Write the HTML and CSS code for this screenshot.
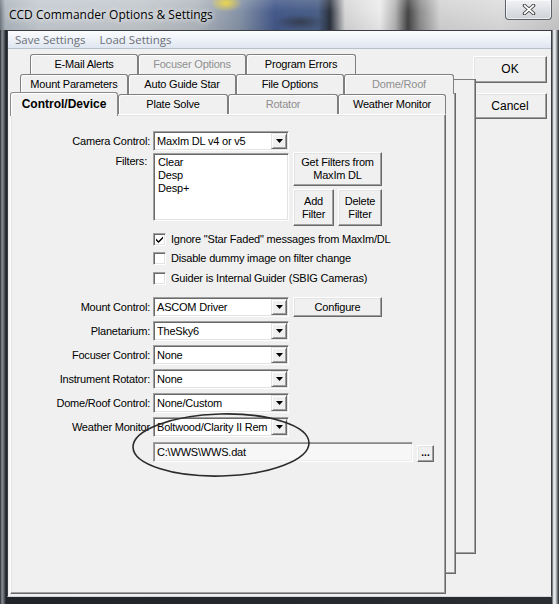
FILE: index.html
```html
<!DOCTYPE html>
<html>
<head>
<meta charset="utf-8">
<title>CCD Commander Options &amp; Settings</title>
<link rel="stylesheet" href="styles.css">
</head>
<body>
<div class="window">
  <div class="titlebar">
    <span class="title">CCD Commander Options &amp; Settings</span>
    <div class="close">
      <svg width="14" height="11" viewBox="0 0 14 11"><path d="M2.5 1.5 L11.5 9.5 M11.5 1.5 L2.5 9.5" stroke="#3a3a3a" stroke-width="3.6" stroke-linecap="round" fill="none"/><path d="M2.5 1.5 L11.5 9.5 M11.5 1.5 L2.5 9.5" stroke="#ffffff" stroke-width="1.7" stroke-linecap="round" fill="none"/></svg>
    </div>
  </div>
  <div class="client">
    <div class="menubar"><span class="menu">Save Settings</span><span class="menu">Load Settings</span></div>
    <div class="main">
      <div class="tabarea">
        <div class="backpage back1"></div>
        <div class="backpage back2"></div>
        <div class="tabrow row1">
          <div class="tab">E-Mail Alerts</div>
          <div class="tab dis">Focuser Options</div>
          <div class="tab last">Program Errors</div>
        </div>
        <div class="tabrow row2">
          <div class="tab">Mount Parameters</div>
          <div class="tab">Auto Guide Star</div>
          <div class="tab">File Options</div>
          <div class="tab dis last">Dome/Roof</div>
        </div>
        <div class="tabrow row3">
          <div class="tab sel">Control/Device</div>
          <div class="tab w110">Plate Solve</div>
          <div class="tab dis w110">Rotator</div>
          <div class="tab">Weather Monitor</div>
        </div>
        <div class="panel">
          <div class="prow r-camera">
            <span class="lbl">Camera Control:</span>
            <div class="combo"><span class="cval">MaxIm DL v4 or v5</span><span class="ddbtn"></span></div>
          </div>
          <div class="prow r-filters">
            <span class="lbl lbl-top">Filters:</span>
            <div class="listbox">
              <div class="item">Clear</div>
              <div class="item">Desp</div>
              <div class="item">Desp+</div>
            </div>
            <div class="fbtns">
              <div class="btn getf">Get Filters from<br>MaxIm DL</div>
              <div class="fb2">
                <div class="btn addf">Add<br>Filter</div>
                <div class="btn delf">Delete<br>Filter</div>
              </div>
            </div>
          </div>
          <div class="cbrow cb1"><span class="cbox checked"><svg width="9" height="9" viewBox="0 0 9 9"><path d="M1 3.5 L3.5 6 L8 1.5 L8 3.5 L3.5 8 L1 5.5 Z" fill="#000"/></svg></span><span class="cbtext">Ignore "Star Faded" messages from MaxIm/DL</span></div>
          <div class="cbrow"><span class="cbox"></span><span class="cbtext">Disable dummy image on filter change</span></div>
          <div class="cbrow"><span class="cbox"></span><span class="cbtext">Guider is Internal Guider (SBIG Cameras)</span></div>
          <div class="prow r-mount">
            <span class="lbl">Mount Control:</span>
            <div class="combo"><span class="cval">ASCOM Driver</span><span class="ddbtn"></span></div>
            <div class="btn config">Configure</div>
          </div>
          <div class="prow r-next">
            <span class="lbl">Planetarium:</span>
            <div class="combo"><span class="cval">TheSky6</span><span class="ddbtn"></span></div>
          </div>
          <div class="prow r-next">
            <span class="lbl">Focuser Control:</span>
            <div class="combo"><span class="cval">None</span><span class="ddbtn"></span></div>
          </div>
          <div class="prow r-next">
            <span class="lbl">Instrument Rotator:</span>
            <div class="combo"><span class="cval">None</span><span class="ddbtn"></span></div>
          </div>
          <div class="prow r-next">
            <span class="lbl">Dome/Roof Control:</span>
            <div class="combo"><span class="cval">None/Custom</span><span class="ddbtn"></span></div>
          </div>
          <div class="prow r-next">
            <span class="lbl">Weather Monitor</span>
            <div class="combo"><span class="cval">Boltwood/Clarity II Rem</span><span class="ddbtn"></span></div>
          </div>
          <div class="pathrow">
            <div class="pathfield">C:\WWS\WWS.dat</div>
            <div class="btn dots">...</div>
          </div>
          <svg class="circle" width="184" height="70" viewBox="0 0 184 70"><ellipse cx="92" cy="34" rx="88" ry="31" fill="none" stroke="#2b2b2b" stroke-width="1.6" transform="rotate(-1.5 92 34)"/></svg>
        </div>
      </div>
      <div class="side">
        <div class="btn okbtn">OK</div>
        <div class="btn cancelbtn">Cancel</div>
      </div>
    </div>
  </div>
</div>
</body>
</html>
```

FILE: styles.css
```css
* { box-sizing: border-box; }
html, body { margin: 0; padding: 0; }
body { width: 559px; height: 604px; overflow: hidden; background: #1e2125; }

.window {
  width: 559px;
  height: 604px;
  display: flex;
  flex-direction: column;
  background:
    linear-gradient(to right, #23262a 0, #8b9197 2px, #5a5f65 4px, #202327 6px, #2a2d31 552px, #cfd2d6 553px, #eceded 555px, #8a8e93 557px, #222 559px);
}

.titlebar {
  height: 30px;
  flex: none;
  display: flex;
  align-items: flex-start;
  justify-content: space-between;
  background:
    radial-gradient(ellipse 16px 9px at 226px 3px, rgba(238,214,70,0.95), rgba(238,214,70,0)),
    radial-gradient(ellipse 26px 8px at 300px 22px, rgba(40,40,40,0.55), rgba(40,40,40,0)),
    linear-gradient(to bottom, rgba(255,255,255,0.15), rgba(255,255,255,0) 40%, rgba(0,0,0,0.05)),
    linear-gradient(to right, #6f7780 0, #aeb6be 5px, #c5cbd1 40px, #c3c8cd 140px, #b3b9bf 195px, #8592a6 240px, #44598a 275px, #4a5f86 318px, #2b313d 330px, #d6d6d6 345px, #ececec 380px, #b5b5b5 395px, #454545 408px, #8d8d8d 420px, #d3d3d3 440px, #dcdcdc 500px, #c9c9c9 559px);
}

.title {
  font-family: "Open Sans", "DejaVu Sans", sans-serif;
  font-size: 12px;
  line-height: 16px;
  padding: 7px 0 0 9px;
  color: #000;
  text-shadow: 0 0 5px rgba(255,255,255,0.9), 0 0 9px rgba(255,255,255,0.6);
}

.close {
  width: 47px;
  height: 20px;
  margin-right: 7px;
  border: 1px solid #5d6268;
  border-top: none;
  border-radius: 0 0 4px 4px;
  background: linear-gradient(to bottom, rgba(245,246,248,0.85), rgba(206,211,217,0.85));
  box-shadow: inset 0 0 0 1px rgba(255,255,255,0.6);
  display: flex;
  align-items: center;
  justify-content: center;
}

.client {
  flex: none;
  height: 567px;
  margin: 0 7px;
  border: 1px solid #3a3e43;
  border-bottom-color: #d6d8db;
  background: #f0f0f0;
}

.menubar {
  height: 18px;
  display: flex;
  align-items: center;
  background: linear-gradient(to bottom, #fbfcfe, #eef2f8 50%, #dfe6f1);
  border-bottom: 1px solid #b9c0cb;
  font-family: "Open Sans", "DejaVu Sans", sans-serif;
  font-size: 11.5px;
  color: #6b6f76;
}
.menu { padding: 0 7px; white-space: nowrap; }

.main {
  display: flex;
  padding-top: 5px;
  font-family: "Liberation Sans", Arial, sans-serif;
  font-size: 11px;
  color: #000;
}

.tabarea {
  position: relative;
  width: 456px;
  margin-left: 2px;
}

.backpage {
  position: absolute;
  z-index: 0;
  background: #f0f0f0;
  border-right: 1px solid #696969;
  border-bottom: 1px solid #696969;
  box-shadow: inset -1px -1px 0 #a0a0a0;
}
.back1 { left: 20px; top: 25px; width: 446px; height: 475px; border-top: 1px solid #7d7d7d; }
.back2 { left: 10px; top: 39px; width: 436px; height: 481px; }

.tabrow {
  position: relative;
  z-index: 2;
  display: flex;
  height: 20px;
}
.row1 { padding-left: 20px; }
.row2 { padding-left: 10px; }
.row3 { z-index: 3; }

.tab {
  flex: none;
  width: 108px;
  height: 20px;
  background: #f0f0f0;
  border: 1px solid #7f7f7f;
  border-bottom: none;
  border-radius: 3px 3px 0 0;
  box-shadow: inset 1px 1px 0 #fff;
  text-align: center;
  line-height: 19px;
  letter-spacing: -0.2px;
  white-space: nowrap;
}
.tab.last { width: 110px; }
.tab.w110 { width: 110px; }
.tab.dis { color: #8f8f8f; }
.tab.sel {
  width: 108px;
  height: 24px;
  margin-top: -2px;
  position: relative;
  z-index: 4;
  font-weight: bold;
  font-size: 12px;
  letter-spacing: 0;
  line-height: 23px;
  border-color: #8a8a8a;
  box-shadow: inset 1px 1px 0 #fff;
}

.panel {
  position: relative;
  z-index: 1;
  width: 436px;
  height: 480px;
  padding: 1px;
  background: #f0f0f0;
  border: 1px solid;
  border-color: #fff #696969 #696969 #fff;
  box-shadow: inset -1px -1px 0 #a0a0a0, inset 1px 1px 0 #e3e3e3;
  letter-spacing: -0.2px;
}

.prow { display: flex; align-items: flex-start; height: 20px; }
.r-camera { margin-top: 15px; }
.r-filters { margin-top: 1px; height: 73px; }
.r-mount { margin-top: 6px; }
.r-next { margin-top: 4px; }

.lbl {
  flex: none;
  width: 138px;
  margin-right: 3px;
  text-align: right;
  line-height: 20px;
  white-space: nowrap;
}
.lbl-top { line-height: 13px; margin-top: 3px; padding-right: 3px; }

.combo {
  flex: none;
  display: flex;
  width: 136px;
  height: 20px;
  background: #fff;
  border: 1px solid;
  border-color: #a0a0a0 #fff #fff #a0a0a0;
  box-shadow: inset 1px 1px 0 #696969, inset -1px -1px 0 #e3e3e3;
}
.cval {
  flex: 1;
  min-width: 0;
  padding-left: 3px;
  line-height: 18px;
  overflow: hidden;
  white-space: nowrap;
}
.ddbtn {
  flex: none;
  position: relative;
  width: 16px;
  height: 16px;
  margin: 1px 1px 0 0;
  background: #f0f0f0;
  border: 1px solid;
  border-color: #e3e3e3 #696969 #696969 #e3e3e3;
  box-shadow: inset 1px 1px 0 #fff, inset -1px -1px 0 #a0a0a0;
}
.ddbtn::after {
  content: "";
  position: absolute;
  left: 4px;
  top: 5px;
  width: 7px;
  height: 4px;
  background: #000;
  clip-path: polygon(0 0, 100% 0, 50% 100%);
}

.listbox {
  flex: none;
  width: 136px;
  height: 68px;
  margin-top: 1px;
  padding: 2px 4px;
  background: #fff;
  border: 1px solid;
  border-color: #a0a0a0 #fff #fff #a0a0a0;
  box-shadow: inset 1px 1px 0 #696969, inset -1px -1px 0 #e3e3e3;
}
.item { line-height: 13px; white-space: nowrap; }

.btn {
  display: flex;
  align-items: center;
  justify-content: center;
  text-align: center;
  background: #f0f0f0;
  border: 1px solid;
  border-color: #fff #696969 #696969 #fff;
  box-shadow: inset -1px -1px 0 #a0a0a0, inset 1px 1px 0 #e3e3e3;
  line-height: 13px;
  white-space: nowrap;
}

.fbtns {
  flex: none;
  margin-left: 4px;
  display: flex;
  flex-direction: column;
  gap: 3px;
}
.getf { width: 89px; height: 34px; }
.fb2 { display: flex; gap: 4px; }
.addf { width: 41px; height: 37px; }
.delf { width: 44px; height: 37px; }
.config { flex: none; width: 89px; height: 20px; margin-left: 4px; }

.cbrow {
  display: flex;
  align-items: flex-start;
  height: 20px;
  padding-left: 141px;
}
.cb1 { margin-top: 7px; height: 19px; }
.cbox {
  flex: none;
  width: 13px;
  height: 13px;
  margin-top: 1px;
  display: flex;
  align-items: center;
  justify-content: center;
  background: #fff;
  border: 1px solid;
  border-color: #a0a0a0 #fff #fff #a0a0a0;
  box-shadow: inset 1px 1px 0 #696969, inset -1px -1px 0 #e3e3e3;
}
.cbtext { margin-left: 5px; line-height: 15px; white-space: nowrap; }

.pathrow {
  display: flex;
  align-items: flex-start;
  height: 20px;
  margin-top: 5px;
  padding-left: 141px;
}
.pathfield {
  flex: none;
  width: 260px;
  height: 20px;
  padding-left: 3px;
  line-height: 18px;
  background: #f7f7f7;
  border: 1px solid;
  border-color: #a0a0a0 #fff #fff #a0a0a0;
  box-shadow: inset 1px 1px 0 #8a8a8a, inset -1px -1px 0 #ececec;
  white-space: nowrap;
}
.dots {
  flex: none;
  width: 17px;
  height: 17px;
  margin-left: 4px;
  margin-top: 3px;
  font-weight: bold;
  font-size: 10px;
  line-height: 10px;
  letter-spacing: 0;
  align-items: flex-end;
  padding-bottom: 3px;
}

.circle {
  position: absolute;
  left: 118px;
  top: 296px;
}

.side {
  flex: none;
  margin-left: 7px;
  padding-top: 2px;
  display: flex;
  flex-direction: column;
  gap: 10px;
}
.okbtn, .cancelbtn { width: 74px; height: 27px; font-size: 12px; }
.cancelbtn { height: 26px; }
```
